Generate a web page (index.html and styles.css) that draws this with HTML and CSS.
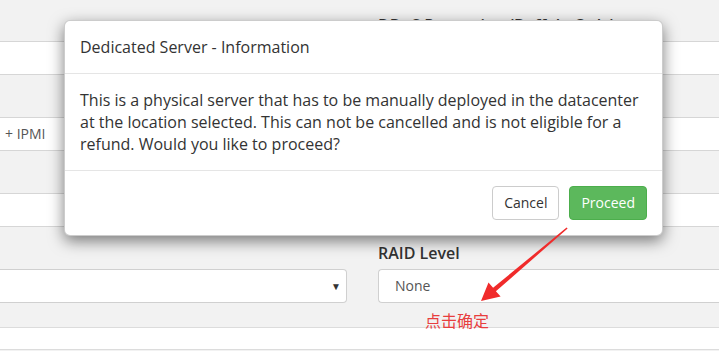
FILE: index.html
```html
<!DOCTYPE html>
<html lang="en">
<head>
    <meta charset="UTF-8">
    <title>Dedicated Server - Information</title>
    <link rel="stylesheet" href="styles.css">
</head>
<body>
    <div class="page">
        <div class="form-row first">
            <div class="form-group">
                <label>&nbsp;</label>
                <div class="field"></div>
            </div>
            <div class="form-group">
                <label>DDoS Protection (Buffalo Only)</label>
                <div class="field"></div>
            </div>
        </div>
        <div class="form-row">
            <div class="form-group">
                <label>&nbsp;</label>
                <div class="field text-left">+ IPMI</div>
            </div>
            <div class="form-group">
                <label>&nbsp;</label>
                <div class="field"></div>
            </div>
        </div>
        <div class="form-row">
            <div class="form-group">
                <label>&nbsp;</label>
                <div class="field"></div>
            </div>
            <div class="form-group">
                <label>&nbsp;</label>
                <div class="field"></div>
            </div>
        </div>
        <div class="form-row">
            <div class="form-group last">
                <label>&nbsp;</label>
                <div class="field select select-left"><span class="caret">&#9660;</span></div>
            </div>
            <div class="form-group last">
                <label>RAID Level</label>
                <div class="field select select-right">None</div>
            </div>
        </div>
        <div class="band"></div>

        <div class="modal">
            <div class="modal-header">Dedicated Server - Information</div>
            <div class="modal-body">
                This is a physical server that has to be manually deployed in the datacenter
                at the location selected. This can not be cancelled and is not eligible for a
                refund. Would you like to proceed?
            </div>
            <div class="modal-footer">
                <button type="button" class="btn btn-default">Cancel</button>
                <button type="button" class="btn btn-success">Proceed</button>
            </div>
        </div>

        <!-- red annotation arrow pointing at RAID Level -->
        <svg class="arrow" width="719" height="351" viewBox="0 0 719 351">
            <polygon points="566.6,227.5 567.6,228.6 495.9,291.2 500.6,296.6 481,301 488.5,282.5 493.1,287.8" fill="#f02b2b"/>
        </svg>
        <div class="note">点击确定</div>
    </div>
</body>
</html>
```

FILE: styles.css
```css
* {
    margin: 0;
    padding: 0;
    box-sizing: border-box;
}

body {
    font-family: "Open Sans", "Noto Sans", sans-serif;
    background-color: #f2f2f2;
    color: #333;
    overflow: hidden;
}

.page {
    position: relative;
    width: 719px;
    height: 351px;
}

.form-row {
    display: grid;
    grid-template-columns: 347px 372px;
    column-gap: 31px;
}

.form-row.first {
    padding-top: 14px;
}

.form-group {
    margin-bottom: 15px;
}

.form-group.last {
    margin-bottom: 0;
}

label {
    display: block;
    font-size: 16px;
    font-weight: 600;
    line-height: 22px;
    margin-bottom: 5px;
    white-space: nowrap;
}

.field {
    height: 34px;
    background: #fff;
    border-top: 1px solid #d6d6d6;
    border-bottom: 1px solid #d6d6d6;
    font-size: 14px;
    line-height: 32px;
    color: #555;
}

.text-left {
    padding-left: 5px;
}

.select {
    border: 1px solid #d0d0d0;
}

.select-left {
    border-left: none;
    border-radius: 0 4px 4px 0;
    display: flex;
    justify-content: flex-end;
    padding-right: 5px;
}

.select-right {
    border-right: none;
    border-radius: 4px 0 0 4px;
    padding-left: 16px;
}

.caret {
    font-size: 10px;
    color: #333;
}

.band {
    margin-top: 24px;
    height: 23px;
    background: #fff;
    border-top: 1px solid #dcdcdc;
    border-bottom: 1px solid #dcdcdc;
}

.modal {
    position: absolute;
    left: 64px;
    top: 20px;
    width: 599px;
    background: #fff;
    border: 1px solid rgba(0, 0, 0, 0.2);
    border-radius: 6px;
    box-shadow: 0 5px 15px rgba(0, 0, 0, 0.5);
}

.modal-header {
    padding: 15px;
    font-size: 16px;
    line-height: 22px;
    border-bottom: 1px solid #e5e5e5;
}

.modal-body {
    padding: 15px;
    font-size: 16px;
    line-height: 22px;
}

.modal-footer {
    display: flex;
    justify-content: flex-end;
    gap: 10px;
    padding: 15px;
    border-top: 1px solid #e5e5e5;
}

.btn {
    font-family: "Open Sans", "Noto Sans", sans-serif;
    font-size: 14px;
    line-height: 20px;
    padding: 6px 11px;
    border: 1px solid transparent;
    border-radius: 4px;
    cursor: pointer;
}

.btn-default {
    background: #fff;
    border-color: #ccc;
    color: #333;
}

.btn-success {
    background: #5cb85c;
    border-color: #4cae4c;
    color: #fff;
}

.arrow {
    position: absolute;
    left: 0;
    top: 0;
    pointer-events: none;
}

.note {
    position: absolute;
    left: 425px;
    top: 309px;
    font-family: "Noto Sans CJK SC", sans-serif;
    font-size: 16px;
    line-height: 22px;
    color: #e83e3e;
}
```
